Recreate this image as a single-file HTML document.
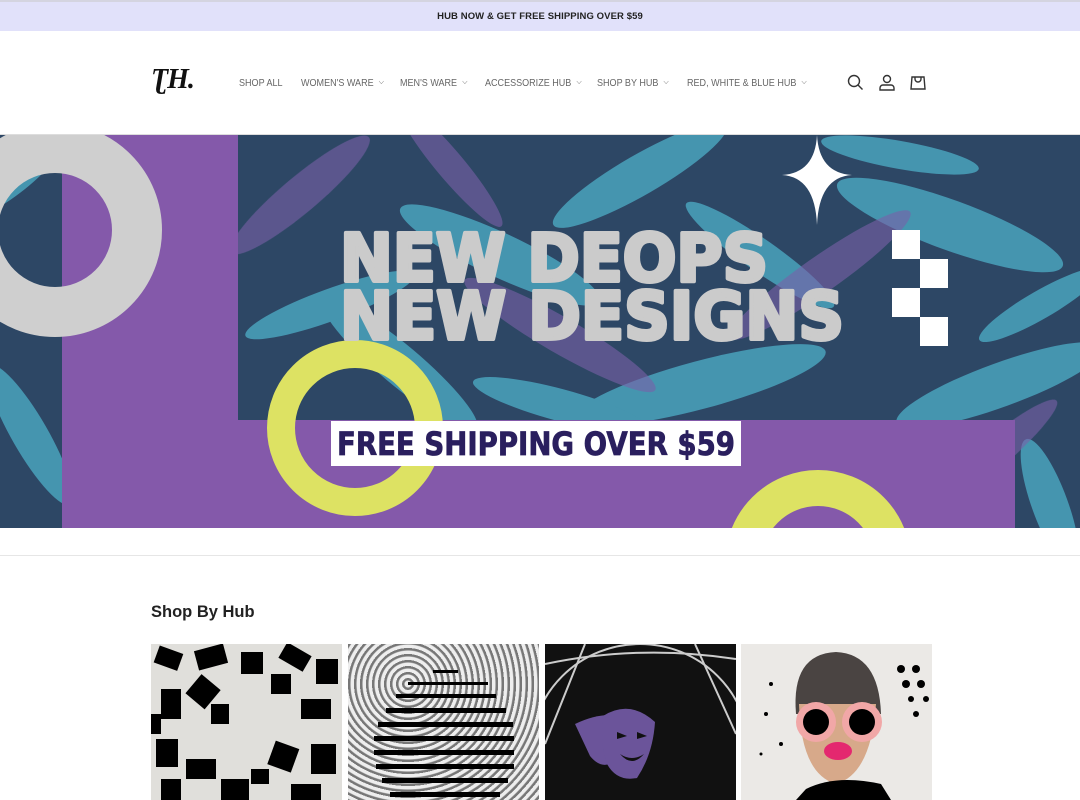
<!DOCTYPE html>
<html><head><meta charset="utf-8"><style>
*{margin:0;padding:0;box-sizing:border-box}
html,body{width:1080px;height:800px;overflow:hidden}
body{background:#fff;font-family:"Liberation Sans",sans-serif;position:relative}
.ann{position:absolute;top:0;left:0;width:1080px;height:31px;background:#e1e1fa;border-top:2px solid #d4d4e0;text-align:center;font-size:9.5px;font-weight:bold;letter-spacing:.1px;line-height:29px;color:#222}
.hdr{position:absolute;top:31px;left:0;width:1080px;height:104px;border-bottom:1px solid #ddd}
.logo{position:absolute;left:151px;top:33px;font-family:"Liberation Serif",serif;font-style:italic;font-weight:bold;font-size:28px;color:#111;letter-spacing:-1px}
.nav{position:absolute;top:46px;font-size:10.5px;color:#666;white-space:nowrap;transform-origin:left center;transform:scaleX(.86)}
.nav i{font-style:normal;font-size:8px;margin-left:6px;position:relative;top:-2px}
h2{position:absolute;left:151px;top:603px;font-size:16.5px;font-weight:bold;color:#222}
.card{position:absolute;top:644px;width:191px;height:156px;overflow:hidden}
</style></head><body>
<div class="ann">HUB NOW &amp; GET FREE SHIPPING OVER $59</div>
<div class="hdr">
<div class="logo">ƮH.</div>
<div class="nav" style="left:239px">SHOP ALL</div>
<div class="nav" style="left:301px">WOMEN'S WARE<i>⌵</i></div>
<div class="nav" style="left:400px">MEN'S WARE<i>⌵</i></div>
<div class="nav" style="left:485px">ACCESSORIZE HUB<i>⌵</i></div>
<div class="nav" style="left:597px">SHOP BY HUB<i>⌵</i></div>
<div class="nav" style="left:687px">RED, WHITE &amp; BLUE HUB<i>⌵</i></div>
<svg style="position:absolute;left:845px;top:42px" width="90" height="20" fill="none" stroke="#333" stroke-width="1.4">
<circle cx="9" cy="8" r="5.5"/><path d="M13 12l4.5 4.5"/>
<circle cx="42" cy="6" r="3.5"/><path d="M35 17v-2a3 3 0 0 1 3-3h8a3 3 0 0 1 3 3v2z"/>
<path d="M67 4h12l1 12h-14z"/><path d="M70 4v2a3 3 0 0 0 6 0V4"/>
</svg>
</div>
<svg style="position:absolute;left:0;top:135px" width="1080" height="393">
<defs><clipPath id="c"><rect width="1080" height="393"/></clipPath></defs>
<g clip-path="url(#c)">
<rect width="1080" height="393" fill="#2d4765"/>
<g fill="#4aa3bd" opacity=".85">
<ellipse cx="500" cy="120" rx="110" ry="22" transform="rotate(25 500 120)"/>
<ellipse cx="700" cy="250" rx="130" ry="24" transform="rotate(-15 700 250)"/>
<ellipse cx="950" cy="90" rx="120" ry="25" transform="rotate(20 950 90)"/>
<ellipse cx="1000" cy="250" rx="110" ry="22" transform="rotate(-20 1000 250)"/>
<ellipse cx="640" cy="40" rx="100" ry="20" transform="rotate(-30 640 40)"/>
<ellipse cx="400" cy="230" rx="100" ry="20" transform="rotate(40 400 230)"/>
<ellipse cx="30" cy="300" rx="80" ry="18" transform="rotate(60 30 300)"/>
<ellipse cx="1050" cy="370" rx="70" ry="18" transform="rotate(70 1050 370)"/>
<ellipse cx="330" cy="170" rx="90" ry="16" transform="rotate(-20 330 170)"/>
<ellipse cx="760" cy="120" rx="90" ry="16" transform="rotate(35 760 120)"/>
<ellipse cx="560" cy="270" rx="90" ry="16" transform="rotate(15 560 270)"/>
<ellipse cx="1040" cy="170" rx="70" ry="14" transform="rotate(-30 1040 170)"/>
<ellipse cx="20" cy="40" rx="60" ry="14" transform="rotate(-40 20 40)"/>
<ellipse cx="900" cy="20" rx="80" ry="14" transform="rotate(10 900 20)"/>
</g>
<g fill="#7a62a8" opacity=".6">
<ellipse cx="300" cy="60" rx="90" ry="18" transform="rotate(-40 300 60)"/>
<ellipse cx="560" cy="200" rx="110" ry="18" transform="rotate(30 560 200)"/>
<ellipse cx="820" cy="140" rx="110" ry="18" transform="rotate(-35 820 140)"/>
<ellipse cx="980" cy="330" rx="100" ry="16" transform="rotate(-40 980 330)"/>
<ellipse cx="450" cy="30" rx="80" ry="14" transform="rotate(50 450 30)"/>
</g>
<path d="M62 0H238V285H1015V393H62Z" fill="#8459aa"/>
<circle cx="55" cy="95" r="82" fill="none" stroke="#cfcfcf" stroke-width="50"/>
<circle cx="355" cy="293" r="74" fill="none" stroke="#dde263" stroke-width="28"/>
<circle cx="818" cy="428" r="75" fill="none" stroke="#dde263" stroke-width="36"/>
<path d="M817 0Q819 38 852 40Q819 42 817 90Q815 42 782 40Q815 38 817 0Z" fill="#fff"/>
<g fill="#fff"><rect x="892" y="95" width="28" height="29"/><rect x="920" y="124" width="28" height="29"/><rect x="892" y="153" width="28" height="29"/><rect x="920" y="182" width="28" height="29"/></g>
<g font-family="DejaVu Sans" font-weight="bold" font-size="66" fill="#cbcbcb" stroke="#cbcbcb" stroke-width="4" stroke-linejoin="round">
<text x="340" y="146" textLength="428" lengthAdjust="spacingAndGlyphs">NEW DEOPS</text>
<text x="340" y="204" textLength="504" lengthAdjust="spacingAndGlyphs">NEW DESIGNS</text>
</g>
<rect x="331" y="286" width="410" height="45" fill="#fff"/>
<text x="337" y="320" font-family="DejaVu Sans" font-weight="bold" font-size="32" fill="#2a1f5e" stroke="#2a1f5e" stroke-width=".8" textLength="398" lengthAdjust="spacingAndGlyphs">FREE SHIPPING OVER $59</text>
</g></svg>
<div style="position:absolute;left:0;top:555px;width:1080px;height:1px;background:#e6e6e6"></div>
<h2>Shop By Hub</h2>
<div class="card" style="left:151px;background:#e0dfdb"><svg width="191" height="156"><g fill="#000">
<rect x="5" y="5" width="25" height="18" transform="rotate(20 17 14)"/><rect x="45" y="3" width="30" height="20" transform="rotate(-15 60 13)"/><rect x="90" y="8" width="22" height="22"/><rect x="130" y="4" width="28" height="18" transform="rotate(30 144 13)"/><rect x="165" y="15" width="22" height="25"/><rect x="10" y="45" width="20" height="30"/><rect x="40" y="35" width="25" height="25" transform="rotate(40 52 47)"/><rect x="150" y="55" width="30" height="20"/><rect x="5" y="95" width="22" height="28"/><rect x="35" y="115" width="30" height="20"/><rect x="120" y="100" width="25" height="25" transform="rotate(20 132 112)"/><rect x="160" y="100" width="25" height="30"/><rect x="70" y="135" width="28" height="21"/><rect x="140" y="140" width="30" height="16"/><rect x="60" y="60" width="18" height="20"/><rect x="10" y="135" width="20" height="21"/><rect x="120" y="30" width="20" height="20"/><rect x="100" y="125" width="18" height="15"/><rect x="0" y="70" width="10" height="20"/></g></svg></div>
<div class="card" style="left:348px;background:repeating-radial-gradient(circle at 60px 40px,#eee 0 3px,#777 4px 6px)"><svg width="191" height="156"><g fill="#000"><rect x="85" y="26" width="25" height="3"/><rect x="60" y="38" width="80" height="3"/><rect x="48" y="50" width="100" height="4"/><rect x="38" y="64" width="120" height="5"/><rect x="30" y="78" width="135" height="5"/><rect x="26" y="92" width="140" height="5"/><rect x="26" y="106" width="140" height="5"/><rect x="28" y="120" width="138" height="5"/><rect x="34" y="134" width="126" height="5"/><rect x="42" y="148" width="110" height="5"/></g></svg></div>
<div class="card" style="left:545px;background:#111"><svg width="191" height="156" fill="none" stroke="#ccc" stroke-width="2"><circle cx="95" cy="110" r="110"/><path d="M40 0L0 100M150 0L191 90M0 20Q95 0 191 15"/><g fill="#6b549a" stroke="none"><path d="M30 80Q55 68 75 72L72 115Q58 128 45 112Z"/><path d="M58 72Q85 55 110 78Q108 110 92 134Q72 138 62 120Q55 100 58 72Z"/></g><g fill="#111" stroke="none"><path d="M72 88l10 4-10 3z"/><path d="M92 88l10 4-10 3z"/><path d="M75 110q12 8 24 0q-12 14-24 0z"/></g></svg></div>
<div class="card" style="left:741px;background:#ebe9e6"><svg width="191" height="156"><g fill="#000"><circle cx="160" cy="25" r="4"/><circle cx="175" cy="25" r="4"/><circle cx="165" cy="40" r="4"/><circle cx="180" cy="40" r="4"/><circle cx="170" cy="55" r="3"/><circle cx="185" cy="55" r="3"/><circle cx="175" cy="70" r="3"/><circle cx="30" cy="40" r="2"/><circle cx="25" cy="70" r="2"/><circle cx="40" cy="100" r="2"/><circle cx="20" cy="110" r="1.5"/></g><path d="M55 70Q50 10 95 8Q138 10 140 70Z" fill="#4a4442"/><path d="M58 60Q60 130 95 140Q130 130 135 60Z" fill="#d7a98a"/><circle cx="75" cy="78" r="20" fill="#f1a7a7"/><circle cx="121" cy="78" r="20" fill="#f1a7a7"/><circle cx="75" cy="78" r="13" fill="#000"/><circle cx="121" cy="78" r="13" fill="#000"/><ellipse cx="97" cy="107" rx="14" ry="9" fill="#e4286f"/><path d="M65 145Q95 130 140 140L150 156H55Z" fill="#000"/></svg></div>
</body></html>
